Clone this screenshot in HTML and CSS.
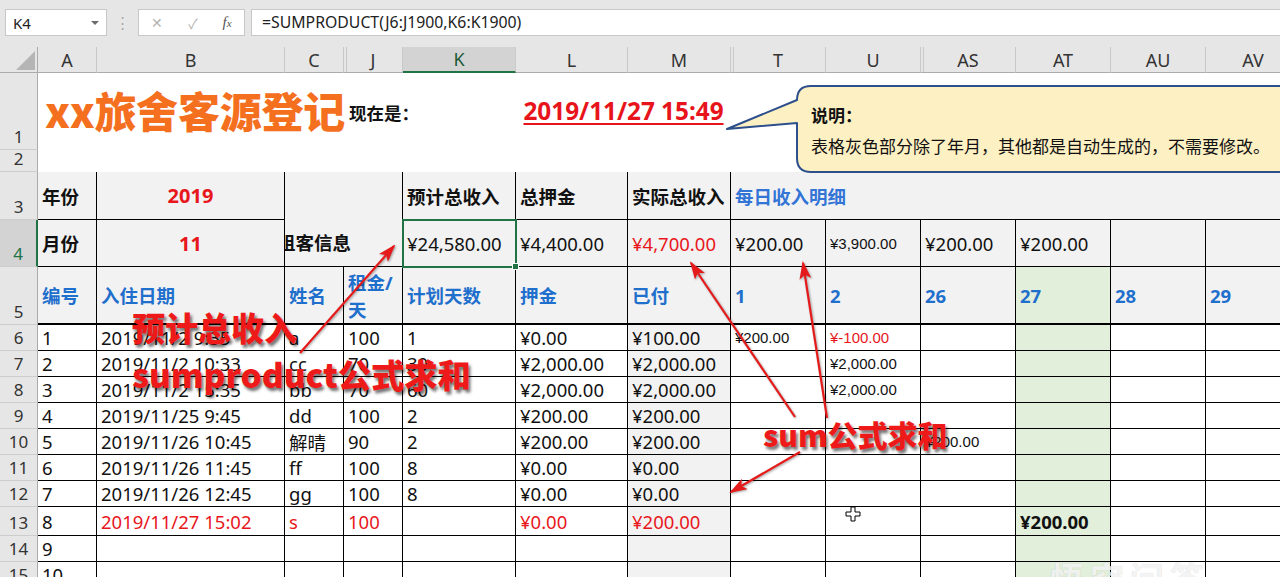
FILE: index.html
```html
<!DOCTYPE html>
<html lang="zh-CN">
<head>
<meta charset="utf-8">
<title>xx旅舍客源登记</title>
<link rel="stylesheet" href="styles.css">
</head>
<body>
<div class="app">
  <div class="fbar">
    <div class="namebox"><span>K4</span><span class="dd"></span></div>
    <div class="dots">⋮</div>
    <div class="fnbox"><span class="fx-x">✕</span><span class="fx-ck">✓</span><span class="fx-f"><i>f</i><small>x</small></span></div>
    <div class="formula">=SUMPRODUCT(J6:J1900,K6:K1900)</div>
  </div>

  <div class="sheet">
    <!-- column headers -->
    <div class="corner"><svg width="38" height="26" viewBox="0 0 38 26"><polygon points="16,23 35,23 35,4" fill="#b5b5b5"/></svg></div>
    <div class="ch">A</div>
    <div class="ch">B</div>
    <div class="ch">C</div>
    <div class="ch dl">J</div>
    <div class="ch sel">K</div>
    <div class="ch">L</div>
    <div class="ch">M</div>
    <div class="ch dl">T</div>
    <div class="ch">U</div>
    <div class="ch dl">AS</div>
    <div class="ch">AT</div>
    <div class="ch">AU</div>
    <div class="ch">AV</div>

    <!-- row 1 -->
    <div class="rh">1</div>
    <div class="title">xx旅舍客源登记</div>
    <div class="now">现在是：</div>
    <div class="date"><span>2019/11/27 15:49</span></div>
    <div class="blank6"></div>

    <!-- row 2 -->
    <div class="rh">2</div>
    <div class="blank13"></div>

    <!-- row 3 -->
    <div class="rh">3</div>
    <div class="c g b">年份</div>
    <div class="c g b red ctr big">2019</div>
    <div class="c g b merged"><span>租客信息</span></div>
    <div class="c g b">预计总收入</div>
    <div class="c g b">总押金</div>
    <div class="c g b">实际总收入</div>
    <div class="c g b blue2 span6">每日收入明细</div>

    <!-- row 4 -->
    <div class="rh rsel">4</div>
    <div class="c g b">月份</div>
    <div class="c g b red ctr big">11</div>
    <div class="c g selcell">¥24,580.00</div>
    <div class="c g">¥4,400.00</div>
    <div class="c g red">¥4,700.00</div>
    <div class="c g">¥200.00</div>
    <div class="c g sm">¥3,900.00</div>
    <div class="c g">¥200.00</div>
    <div class="c g">¥200.00</div>
    <div class="c g"></div>
    <div class="c g"></div>

    <!-- row 5 -->
    <div class="rh">5</div>
    <div class="c g h">编号</div>
    <div class="c g h">入住日期</div>
    <div class="c g h">姓名</div>
    <div class="c g h wrap">租金/<br>天</div>
    <div class="c g h">计划天数</div>
    <div class="c g h">押金</div>
    <div class="c g h">已付</div>
    <div class="c g h">1</div>
    <div class="c g h">2</div>
    <div class="c g h">26</div>
    <div class="c gr h">27</div>
    <div class="c g h">28</div>
    <div class="c g h">29</div>

    <!-- row 6 -->
    <div class="rh">6</div>
    <div class="c">1</div><div class="c">2019/11/2 9:35</div><div class="c">a</div><div class="c">100</div><div class="c">1</div><div class="c">¥0.00</div><div class="c g">¥100.00</div><div class="c sm">¥200.00</div><div class="c sm red">¥-100.00</div><div class="c"></div><div class="c gr"></div><div class="c"></div><div class="c"></div>

    <!-- row 7 -->
    <div class="rh">7</div>
    <div class="c">2</div><div class="c">2019/11/2 10:33</div><div class="c">cc</div><div class="c">70</div><div class="c">30</div><div class="c">¥2,000.00</div><div class="c g">¥2,000.00</div><div class="c"></div><div class="c sm">¥2,000.00</div><div class="c"></div><div class="c gr"></div><div class="c"></div><div class="c"></div>

    <!-- row 8 -->
    <div class="rh">8</div>
    <div class="c">3</div><div class="c">2019/11/2 15:35</div><div class="c">bb</div><div class="c">70</div><div class="c">60</div><div class="c">¥2,000.00</div><div class="c g">¥2,000.00</div><div class="c"></div><div class="c sm">¥2,000.00</div><div class="c"></div><div class="c gr"></div><div class="c"></div><div class="c"></div>

    <!-- row 9 -->
    <div class="rh">9</div>
    <div class="c">4</div><div class="c">2019/11/25 9:45</div><div class="c">dd</div><div class="c">100</div><div class="c">2</div><div class="c">¥200.00</div><div class="c g">¥200.00</div><div class="c"></div><div class="c"></div><div class="c"></div><div class="c gr"></div><div class="c"></div><div class="c"></div>

    <!-- row 10 -->
    <div class="rh">10</div>
    <div class="c">5</div><div class="c">2019/11/26 10:45</div><div class="c">解晴</div><div class="c">90</div><div class="c">2</div><div class="c">¥200.00</div><div class="c g">¥200.00</div><div class="c"></div><div class="c"></div><div class="c sm">¥200.00</div><div class="c gr"></div><div class="c"></div><div class="c"></div>

    <!-- row 11 -->
    <div class="rh">11</div>
    <div class="c">6</div><div class="c">2019/11/26 11:45</div><div class="c">ff</div><div class="c">100</div><div class="c">8</div><div class="c">¥0.00</div><div class="c g">¥0.00</div><div class="c"></div><div class="c"></div><div class="c"></div><div class="c gr"></div><div class="c"></div><div class="c"></div>

    <!-- row 12 -->
    <div class="rh">12</div>
    <div class="c">7</div><div class="c">2019/11/26 12:45</div><div class="c">gg</div><div class="c">100</div><div class="c">8</div><div class="c">¥0.00</div><div class="c g">¥0.00</div><div class="c"></div><div class="c"></div><div class="c"></div><div class="c gr"></div><div class="c"></div><div class="c"></div>

    <!-- row 13 -->
    <div class="rh">13</div>
    <div class="c">8</div><div class="c red">2019/11/27 15:02</div><div class="c red">s</div><div class="c red">100</div><div class="c"></div><div class="c red">¥0.00</div><div class="c g red">¥200.00</div><div class="c"></div><div class="c"></div><div class="c"></div><div class="c gr b">¥200.00</div><div class="c"></div><div class="c"></div>

    <!-- row 14 -->
    <div class="rh">14</div>
    <div class="c">9</div><div class="c"></div><div class="c"></div><div class="c"></div><div class="c"></div><div class="c"></div><div class="c g"></div><div class="c"></div><div class="c"></div><div class="c"></div><div class="c gr"></div><div class="c"></div><div class="c"></div>

    <!-- row 15 -->
    <div class="rh">15</div>
    <div class="c">10</div><div class="c"></div><div class="c"></div><div class="c"></div><div class="c"></div><div class="c"></div><div class="c g"></div><div class="c"></div><div class="c"></div><div class="c"></div><div class="c gr"></div><div class="c"></div><div class="c"></div>
  </div>

  <!-- overlays: callout, arrows, cursor -->
  <svg class="overlay" width="1280" height="577" viewBox="0 0 1280 577">
    <defs>
      <marker id="ah" markerWidth="18" markerHeight="12" refX="16" refY="6" orient="auto" markerUnits="userSpaceOnUse">
        <polygon points="0,0 18,6 0,12 4,6" fill="#e51b1b"/>
      </marker>
    </defs>
    <path d="M797,100 L727,129 L797,123 L797,158 Q797,172 811,172 L1300,172 L1300,86 L811,86 Q797,86 797,100 Z" fill="#fdf0c3" stroke="#2d4f8c" stroke-width="2" stroke-linejoin="round"/>
    <g class="arrows" stroke="#e51b1b" stroke-width="2.2" fill="none">
      <line x1="300" y1="353" x2="394" y2="246" marker-end="url(#ah)"/>
      <line x1="795" y1="417" x2="691" y2="263" marker-end="url(#ah)"/>
      <line x1="827" y1="418" x2="803" y2="263" marker-end="url(#ah)"/>
      <line x1="800" y1="452" x2="731" y2="492" marker-end="url(#ah)"/>
    </g>
    <polygon points="851,507 855,507 855,512 860,512 860,516 855,516 855,521 851,521 851,516 846,516 846,512 851,512" fill="#fff" stroke="#000" stroke-width="1"/>
  </svg>

  <div class="note">
    <div class="note-t">说明：</div>
    <div class="note-b">表格灰色部分除了年月，其他都是自动生成的，不需要修改。</div>
  </div>

  <div class="ann ann1">预计总收入</div>
  <div class="ann ann2">sumproduct公式求和</div>
  <div class="ann ann3">sum公式求和</div>
  <div class="wm">悟空问答</div>
</div>
</body>
</html>
```

FILE: styles.css
```css
html, body {
  margin: 0;
  padding: 0;
  background: #fff;
}

.app {
  position: relative;
  width: 1280px;
  height: 577px;
  overflow: hidden;
  background: #fff;
  font-family: "Noto Sans", "Noto Sans CJK SC", sans-serif;
  color: #111;
}

/* ---------- formula bar ---------- */
.fbar {
  height: 47px;
  box-sizing: border-box;
  padding-top: 9px;
  background: #e6e6e6;
  display: flex;
  align-items: flex-start;
}

.namebox {
  margin-left: 5px;
  width: 102px;
  height: 27px;
  box-sizing: border-box;
  background: #fff;
  border: 1px solid #c8c8c8;
  display: flex;
  align-items: center;
  justify-content: space-between;
  padding: 0 7px 0 7px;
  font-size: 15px;
  color: #222;
}

.dd {
  width: 0;
  height: 0;
  border-left: 4px solid transparent;
  border-right: 4px solid transparent;
  border-top: 4px solid #6d6d6d;
}

.dots {
  width: 31px;
  height: 27px;
  line-height: 27px;
  text-align: center;
  color: #a8a8a8;
  font-size: 15px;
}

.fnbox {
  width: 107px;
  height: 27px;
  box-sizing: border-box;
  background: #fff;
  border: 1px solid #c8c8c8;
  display: flex;
  align-items: center;
  justify-content: space-around;
  color: #b3b3b3;
  font-size: 14px;
}

.fx-f {
  color: #555;
  font-family: "Liberation Serif", serif;
  font-size: 15px;
}
.fx-f small { font-size: 11px; font-style: italic; }

.formula {
  margin-left: 6px;
  flex: 1;
  height: 27px;
  box-sizing: border-box;
  background: #fff;
  border-top: 1px solid #c8c8c8;
  border-bottom: 1px solid #c8c8c8;
  border-left: 1px solid #c8c8c8;
  padding-left: 10px;
  font-size: 15.8px;
  line-height: 25px;
  color: #222;
  white-space: nowrap;
}

/* ---------- sheet grid ---------- */
.sheet {
  display: grid;
  grid-template-columns: 38px 59px 188px 59px 59px 113px 112px 103px 95px 95px 95px 95px 95px 95px;
  grid-template-rows: 26px 77px 22px 48px 47px 58px repeat(7, 26px) 29px 26px 26px;
  width: 1301px;
}

.corner {
  background: #e6e6e6;
  border-right: 1px solid #ababab;
  border-bottom: 1px solid #ababab;
  box-sizing: border-box;
  overflow: hidden;
}
.corner svg { display: block; }

.ch {
  background: #e6e6e6;
  border-right: 1px solid #c9c9c9;
  border-bottom: 1px solid #ababab;
  box-sizing: border-box;
  display: flex;
  align-items: center;
  justify-content: center;
  font-size: 18px;
  color: #333;
}
.ch.dl { box-shadow: inset 2px 0 0 #e6e6e6, inset 3px 0 0 #c9c9c9; }
.ch.sel {
  background: #d3d3d3;
  border-bottom: 2px solid #217346;
  color: #1d5a36;
}

.rh {
  background: #e6e6e6;
  border-right: 1px solid #ababab;
  border-bottom: 1px solid #cdcdcd;
  box-sizing: border-box;
  display: flex;
  align-items: flex-end;
  justify-content: center;
  font-size: 17px;
  line-height: 24px;
  color: #333;
}
.rh.rsel {
  background: #d3d3d3;
  color: #217346;
  border-right: 2px solid #217346;
}

/* row 1 / row 2 */
.title {
  grid-column: span 3;
  display: flex;
  align-items: center;
  padding: 0 0 4px 7px;
  font-family: "Noto Sans CJK SC", sans-serif;
  font-weight: 900;
  font-size: 42px;
  color: #f4701f;
  white-space: nowrap;
  overflow: visible;
  position: relative;
  z-index: 1;
  letter-spacing: -0.3px;
}

.now {
  grid-column: span 2;
  display: flex;
  align-items: center;
  padding: 2px 0 0 5px;
  font-family: "Noto Sans CJK SC", sans-serif;
  font-weight: 700;
  font-size: 17.5px;
  white-space: nowrap;
}

.date {
  grid-column: span 2;
  display: flex;
  align-items: center;
  justify-content: center;
  padding-bottom: 2px;
  font-weight: 700;
  font-size: 24.3px;
  color: #e8141b;
  white-space: nowrap;
}
.date span {
  text-decoration: underline;
  text-decoration-thickness: 2px;
  text-underline-offset: 3px;
}

.blank6 { grid-column: span 6; }
.blank13 { grid-column: span 13; }

/* cells */
.c {
  box-sizing: border-box;
  border-right: 1px solid #000;
  border-bottom: 1px solid #000;
  display: flex;
  align-items: center;
  padding-left: 4px;
  font-size: 18.5px;
  white-space: nowrap;
  overflow: hidden;
  background: #fff;
  color: #111;
}
.g { background: #f2f2f2; }
.gr { background: #e2efda; }
.b { font-weight: 700; }
.red { color: #e8171c; }
.ctr { justify-content: center; padding-left: 0; }
.big { font-size: 20px; }
.span6 { grid-column: span 6; }
.blue2 { color: #3375d6; }

.h {
  font-weight: 700;
  color: #1f6fcc;
  border-bottom: 2px solid #000;
}
.h.wrap {
  white-space: normal;
  line-height: 27px;
  padding-top: 2px;
}

.sm {
  font-family: "Liberation Sans", sans-serif;
  font-size: 15px;
}
.sm.red { color: #e8171c; }

.merged {
  grid-column: span 2;
  grid-row: span 2;
  align-items: flex-end;
  padding: 0 0 11px 0;
}
.merged span { margin-left: -8px; }

.selcell {
  position: relative;
  outline: 2px solid #217346;
  outline-offset: -1px;
  z-index: 2;
  overflow: visible;
}
.selcell::after {
  content: "";
  position: absolute;
  right: -4px;
  bottom: -4px;
  width: 5px;
  height: 5px;
  background: #217346;
  border: 1px solid #fff;
}

/* overlays */
.overlay {
  position: absolute;
  left: 0;
  top: 0;
  z-index: 5;
  pointer-events: none;
}
.arrows { filter: drop-shadow(1px 1px 1px rgba(0,0,0,0.35)); }

.note {
  position: absolute;
  left: 811px;
  top: 99px;
  z-index: 6;
  font-family: "Noto Sans CJK SC", sans-serif;
  font-size: 17px;
  color: #111;
  white-space: nowrap;
}
.note-t { font-weight: 700; line-height: 32px; }
.note-b { line-height: 30px; }

.ann {
  position: absolute;
  z-index: 7;
  font-family: "Noto Sans CJK SC", sans-serif;
  font-weight: 900;
  color: #ee1a1a;
  white-space: nowrap;
  line-height: 1;
  text-shadow: 2px 3px 3px rgba(0,0,0,0.55);
}
.ann1 { left: 132px; top: 311px; font-size: 33px; }
.ann2 { left: 132px; top: 357px; font-size: 33.3px; }
.ann3 { left: 763px; top: 419px; font-size: 30px; }

.wm {
  position: absolute;
  left: 1050px;
  top: 553px;
  z-index: 6;
  font-family: "Noto Sans CJK SC", sans-serif;
  font-weight: 700;
  font-size: 34px;
  color: rgba(255,255,255,0.8);
  text-shadow: 0 0 1px rgba(0,0,0,0.2);
  letter-spacing: 6px;
}
```
